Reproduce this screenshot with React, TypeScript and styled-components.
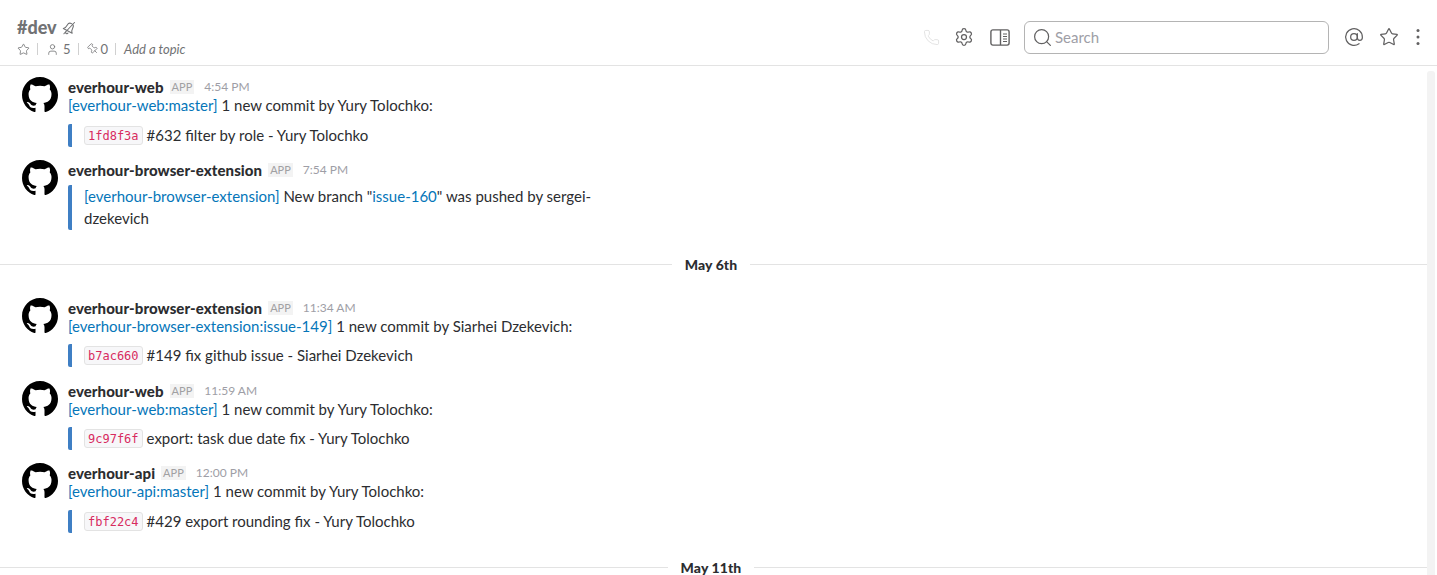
import React from "react";
import styled, { createGlobalStyle } from "styled-components";
import { AtSign, Phone, Pin, Search, Settings, Star, User } from "lucide-react";

const Global = createGlobalStyle`
  html, body { margin: 0; padding: 0; height: 575px; overflow: hidden; background: #fff; }
  body { font-family: Lato, "Noto Sans", sans-serif; color: #2c2d30; }
  #root { height: 575px; }
`;

const Page = styled.div`
  position: relative;
  height: 575px;
  overflow: hidden;
  display: flex;
  flex-direction: column;
`;
const Header = styled.header`
  flex: none;
  box-sizing: border-box;
  height: 66px;
  border-bottom: 1px solid #e3e3e3;
  display: flex;
  justify-content: space-between;
  align-items: flex-start;
  padding: 17px 17px 0 17px;
`;
const ChannelInfo = styled.div`
  display: flex;
  flex-direction: column;
`;
const TitleRow = styled.div`
  display: flex;
  align-items: center;
  gap: 5px;
  height: 20px;
`;
const Title = styled.h1`
  margin: 0;
  font-size: 18px;
  line-height: 20px;
  font-weight: 900;
  color: #717274;
`;
const MetaRow = styled.div`
  display: flex;
  align-items: center;
  height: 18px;
  margin-top: 3px;
  font-size: 13px;
  color: #717274;
`;
const MetaItem = styled.span<{ $gap?: number }>`
  display: inline-flex;
  align-items: center;
  gap: ${(p) => p.$gap ?? 0}px;
`;
const MetaSep = styled.span`
  width: 1px;
  height: 12px;
  background: #d0d0d0;
  margin: 0 8px 0 7px;
`;
const TiltedPin = styled(Pin)`
  transform: rotate(-45deg);
`;
const Topic = styled.span`
  font-style: italic;
  font-size: 13px;
`;
const Toolbar = styled.div`
  display: flex;
  align-items: center;
  height: 34px;
  margin-top: 3px;
  color: #616061;
`;
const ToolIcon = styled.span<{ $left?: number; $muted?: boolean }>`
  display: inline-flex;
  margin-left: ${(p) => p.$left ?? 0}px;
  color: ${(p) => (p.$muted ? "#e3e3e3" : "#616061")};
`;
const SearchBox = styled.div`
  box-sizing: border-box;
  width: 305px;
  height: 33px;
  margin-left: 14px;
  border: 1px solid #b4b4b4;
  border-radius: 6px;
  display: flex;
  align-items: center;
  gap: 2px;
  padding-left: 7px;
  font-size: 15px;
  color: #9e9ea6;
`;
const Messages = styled.main`
  flex: 1;
  min-height: 0;
  padding: 11px 10px 0 0;
  display: flex;
  flex-direction: column;
`;
const Message = styled.article<{ $gap?: number }>`
  flex: none;
  display: flex;
  gap: 10px;
  padding-left: 22px;
  margin-bottom: ${(p) => p.$gap ?? 13}px;
`;
const Avatar = styled.svg`
  flex: none;
  width: 36px;
  height: 36px;
  display: block;
`;
const Body = styled.div`
  min-width: 0;
`;
const NameRow = styled.div`
  display: flex;
  align-items: center;
  height: 18px;
  font-size: 15px;
  line-height: 18px;
  margin-top: 1px;
`;
const Name = styled.strong`
  font-weight: 900;
  letter-spacing: 0.07px;
  color: #2c2d30;
`;
const AppTag = styled.span`
  margin-left: 6px;
  padding: 0 2px;
  background: #f3f3f3;
  color: #a0a0a2;
  font-size: 11px;
  line-height: 14px;
`;
const Time = styled.span`
  margin-left: 10px;
  font-size: 12px;
  color: #9e9ea6;
`;
const Line = styled.div`
  font-size: 15px;
  line-height: 22px;
  height: 22px;
  margin-top: -2px;
`;
const LinkText = styled.a`
  color: #0576b9;
`;
const Attachment = styled.div<{ $top?: number }>`
  box-sizing: border-box;
  width: 540px;
  margin-top: ${(p) => p.$top ?? 8}px;
  border-left: 4px solid #3f7fc4;
  border-radius: 2px;
  padding: 0 0 1px 12px;
  font-size: 15px;
  line-height: 22px;
`;
const Code = styled.code`
  display: inline-block;
  box-sizing: border-box;
  height: 19px;
  padding: 0 3px;
  margin-right: 4px;
  border: 1px solid #e3e3e3;
  border-radius: 3px;
  background: #f7f7f9;
  color: #d72b5f;
  font-family: "DejaVu Sans Mono", monospace;
  font-size: 12px;
  line-height: 18px;
  vertical-align: 1px;
`;
const Divider = styled.div<{ $after?: number }>`
  flex: none;
  display: flex;
  align-items: center;
  gap: 13px;
  height: 20px;
  margin-bottom: ${(p) => p.$after ?? 0}px;
  font-size: 14px;
  font-weight: 900;
  letter-spacing: 0.1px;
  color: #2c2d30;
  &::before, &::after {
    content: "";
    flex: 1 1 0;
    height: 1px;
    background: #e3e3e3;
  }
  &::after {
    flex-basis: 5px;
  }
`;
const Scrollbar = styled.div`
  position: absolute;
  left: 1427px;
  top: 71px;
  bottom: 0;
  width: 8px;
  background: #f3f3f3;
  border-radius: 3px 3px 0 0;
`;

const GithubMark = () => (
  <Avatar viewBox="0 0 16 16" aria-hidden>
    <path
      fill="#000"
      d="M8 0C3.58 0 0 3.58 0 8c0 3.54 2.29 6.53 5.47 7.59.4.07.55-.17.55-.38 0-.19-.01-.82-.01-1.49-2.01.37-2.53-.49-2.69-.94-.09-.23-.48-.94-.82-1.13-.28-.15-.68-.52-.01-.53.63-.01 1.08.58 1.23.82.72 1.21 1.87.87 2.33.66.07-.52.28-.87.51-1.07-1.78-.2-3.64-.89-3.64-3.95 0-.87.31-1.59.82-2.15-.08-.2-.36-1.02.08-2.12 0 0 .67-.21 2.2.82.64-.18 1.32-.27 2-.27.68 0 1.36.09 2 .27 1.53-1.04 2.2-.82 2.2-.82.44 1.1.16 1.92.08 2.12.51.56.82 1.27.82 2.15 0 3.07-1.87 3.75-3.65 3.95.29.25.54.73.54 1.48 0 1.07-.01 1.93-.01 2.2 0 .21.15.46.55.38A8.013 8.013 0 0016 8c0-4.42-3.58-8-8-8z"
    />
  </Avatar>
);

const MutedBellIcon = () => (
  <svg width="15" height="15" viewBox="0 0 24 24" fill="none" stroke="#717274" strokeWidth="1.7" strokeLinecap="round" strokeLinejoin="round" aria-hidden>
    <g transform="rotate(28 12 12)">
      <path d="M4 18c2-1.500 3-3.500 3-8a5 5 0 0 1 10 0c0 4.500 1 6.500 3 8Z" />
      <path d="M10 21a2 2 0 0 0 4 0" />
    </g>
    <path d="M3 22 20 4" />
  </svg>
);

const SidebarIcon = () => (
  <svg width="20" height="17" viewBox="0 0 20 17" fill="none" stroke="currentColor" strokeWidth="1.4" aria-hidden>
    <rect x="0.9" y="0.9" width="18.2" height="15.2" rx="2" />
    <path d="M10.5 1v15" strokeWidth="1.4" />
    <path d="M13 5h4M13 7.500h4M13 10h4M13 12.500h4" strokeWidth="1.1" />
  </svg>
);

const DotsIcon = () => (
  <svg width="4" height="18" viewBox="0 0 4 18" fill="currentColor" aria-hidden>
    <circle cx="2" cy="2.500" r="1.500" />
    <circle cx="2" cy="9" r="1.500" />
    <circle cx="2" cy="15.500" r="1.500" />
  </svg>
);

type Msg = { name: string; time: string; link: string; by: string; sha: string; text: string };

const Commit = ({ name, time, link, by, sha, text, gap, top }: Msg & { gap?: number; top?: number }) => (
  <Message $gap={gap}>
    <GithubMark />
    <Body>
      <NameRow>
        <Name>{name}</Name>
        <AppTag>APP</AppTag>
        <Time>{time}</Time>
      </NameRow>
      <Line>
        <LinkText>{link}</LinkText> {by}
      </Line>
      <Attachment $top={top}>
        <Code>{sha}</Code>
        {text}
      </Attachment>
    </Body>
  </Message>
);

export default function App() {
  return (
    <Page>
      <Global />
      <Header>
        <ChannelInfo>
          <TitleRow>
            <Title>#dev</Title>
            <MutedBellIcon />
          </TitleRow>
          <MetaRow>
            <MetaItem><Star size={13} strokeWidth={1.5} /></MetaItem>
            <MetaSep />
            <MetaItem $gap={4}><User size={13} strokeWidth={1.5} />5</MetaItem>
            <MetaSep />
            <MetaItem $gap={2}><TiltedPin size={12} strokeWidth={1.5} />0</MetaItem>
            <MetaSep />
            <Topic>Add a topic</Topic>
          </MetaRow>
        </ChannelInfo>
        <Toolbar>
          <ToolIcon $muted><Phone size={17} strokeWidth={1.4} /></ToolIcon>
          <ToolIcon $left={14}><Settings size={20} strokeWidth={1.5} /></ToolIcon>
          <ToolIcon $left={16}><SidebarIcon /></ToolIcon>
          <SearchBox>
            <Search size={21} strokeWidth={1.4} color="#616061" />
            Search
          </SearchBox>
          <ToolIcon $left={15}><AtSign size={20} strokeWidth={1.5} /></ToolIcon>
          <ToolIcon $left={15}><Star size={20} strokeWidth={1.5} /></ToolIcon>
          <ToolIcon $left={17}><DotsIcon /></ToolIcon>
        </Toolbar>
      </Header>
      <Messages>
        <Commit name="everhour-web" time="4:54 PM" link="[everhour-web:master]" by="1 new commit by Yury Tolochko:" sha="1fd8f3a" text="#632 filter by role - Yury Tolochko" />
        <Message $gap={24}>
          <GithubMark />
          <Body>
            <NameRow>
              <Name>everhour-browser-extension</Name>
              <AppTag>APP</AppTag>
              <Time>7:54 PM</Time>
            </NameRow>
            <Attachment $top={6}>
              <LinkText>[everhour-browser-extension]</LinkText> New branch "<LinkText>issue-160</LinkText>" was pushed by sergei-dzekevich
            </Attachment>
          </Body>
        </Message>
        <Divider $after={24}>May 6th</Divider>
        <Commit name="everhour-browser-extension" time="11:34 AM" link="[everhour-browser-extension:issue-149]" by="1 new commit by Siarhei Dzekevich:" sha="b7ac660" text="#149 fix github issue - Siarhei Dzekevich" top={7} gap={14} />
        <Commit name="everhour-web" time="11:59 AM" link="[everhour-web:master]" by="1 new commit by Yury Tolochko:" sha="9c97f6f" text="export: task due date fix - Yury Tolochko" top={7} gap={13} />
        <Commit name="everhour-api" time="12:00 PM" link="[everhour-api:master]" by="1 new commit by Yury Tolochko:" sha="fbf22c4" text="#429 export rounding fix - Yury Tolochko" gap={24} />
        <Divider>May 11th</Divider>
      </Messages>
      <Scrollbar />
    </Page>
  );
}
